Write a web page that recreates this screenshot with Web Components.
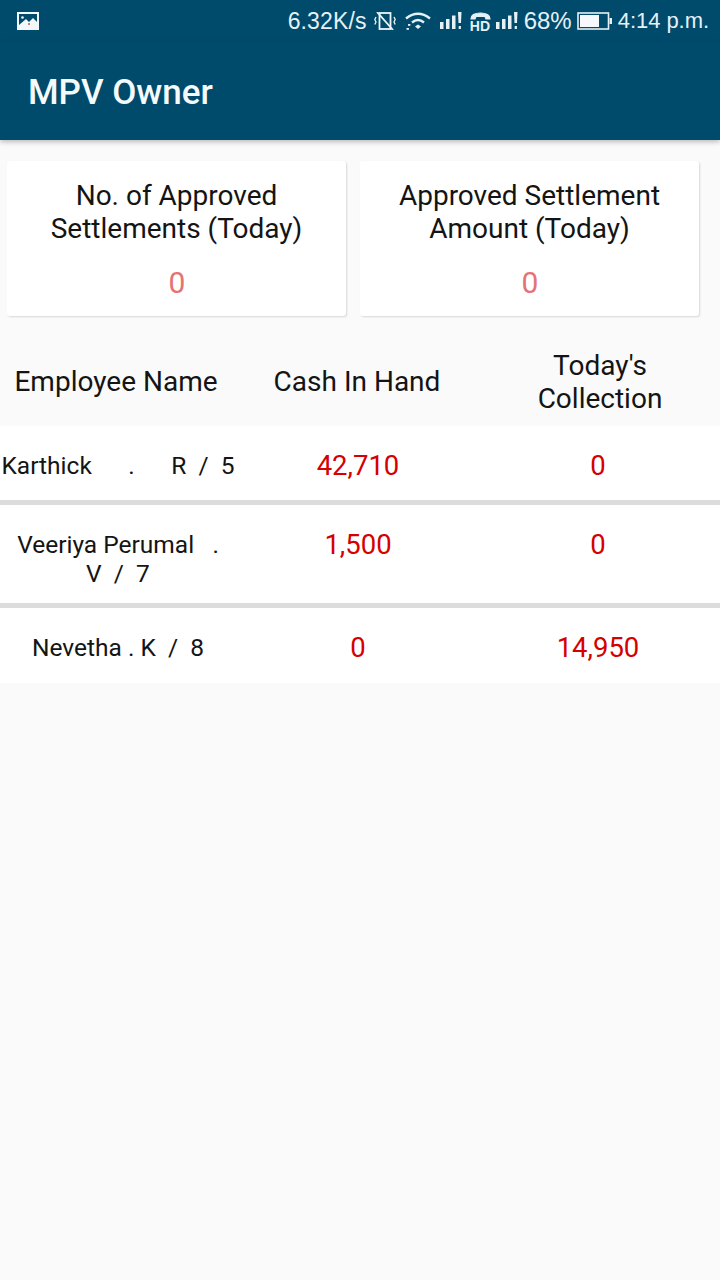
<!DOCTYPE html>
<html>
<head>
<meta charset="utf-8">
<title>MPV Owner</title>
<style>
html, body { margin: 0; padding: 0; background: #fafafa; }
body { width: 720px; height: 1280px; overflow: hidden; font-family: Roboto, sans-serif; display: flex; flex-direction: column; }
</style>
</head>
<body>
<status-bar></status-bar>
<app-bar>MPV Owner</app-bar>
<summary-row>
  <stat-card value="0">No. of Approved<br>Settlements (Today)</stat-card>
  <stat-card value="0">Approved Settlement<br>Amount (Today)</stat-card>
</summary-row>
<table-head></table-head>
<employee-row name="Karthick      .      R  /  5" cash="42,710" collection="0" style="height:74px"></employee-row>
<employee-row name="Veeriya Perumal   .    V  /  7" cash="1,500" collection="0" style="height:98px"></employee-row>
<employee-row name="Nevetha . K  /  8" cash="0" collection="14,950" style="height:75px" last></employee-row>

<script>
const signalBars = (mark) => `
    <rect x="0" y="10" width="3.5" height="7"/>
    <rect x="6" y="7" width="3.5" height="10"/>
    <rect x="12" y="3.5" width="3.5" height="13.5"/>
    <path d="M18 0 H21.5 L21 11 H18.5 Z"/>
    <rect x="18.7" y="${mark}" width="2.2" height="3"/>
`;

class StatusBar extends HTMLElement {
    constructor() {
        super();
        this.attachShadow({ mode: 'open' });
        this.shadowRoot.innerHTML = `
            <style>
                :host {
                    display: flex;
                    align-items: center;
                    height: 42px;
                    background: #004a6c;
                    color: #e6f1f5;
                    font-family: "Liberation Sans", sans-serif;
                    font-size: 23px;
                    padding: 0 11px 0 17px;
                    box-sizing: border-box;
                }
                .right { margin-left: auto; display: flex; align-items: center; white-space: nowrap; }
                svg { display: block; flex: none; }
                .speed { letter-spacing: .15px; }
                .level { font-size: 24px; margin-left: 6px; }
                .time { font-size: 22px; margin-left: 6px; letter-spacing: -.05px; }
            </style>
            <svg width="22" height="18" viewBox="0 0 22 18">
                <rect width="22" height="18" fill="#f2f7f9"/>
                <rect x="2" y="2" width="18" height="13" fill="#004a6c"/>
                <path d="M2 15 V13 L9 7 L12 10 L16 6 L20 10 V15 Z" fill="#f2f7f9"/>
                <circle cx="5.5" cy="5.5" r="1.3" fill="#f2f7f9"/>
                <circle cx="12" cy="12" r="1" fill="#b5566a"/>
            </svg>
            <div class="right">
                <span class="speed">6.32K/s</span>
                <svg style="margin-left:7px" width="22" height="18" viewBox="0 0 22 18" fill="none" stroke="#eef5f8" stroke-width="1.8">
                    <rect x="5.5" y="1" width="11" height="16"/>
                    <path d="M3 0 L19 18"/>
                    <path d="M2 5 L0.8 7.500 L2 10 L0.8 12.500 M20 5 L21.2 7.500 L20 10 L21.2 12.500" stroke-width="1.3"/>
                </svg>
                <svg style="margin-left:9px" width="26" height="18" viewBox="0 0 26 18" fill="none" stroke="#e6f1f5" stroke-width="2.4">
                    <path d="M1 6.5 Q13 -3 25 6.5"/>
                    <path d="M7 10.5 Q13 5.5 19 10.5"/>
                    <path d="M10 14.5 L13 12.5 L16 14.5 L13 17 Z" fill="#e6f1f5" stroke="none"/>
                    <rect x="3" y="12" width="2.4" height="1.8" fill="#e6f1f5" stroke="none"/>
                    <rect x="1.5" y="16" width="2.4" height="1.8" fill="#e6f1f5" stroke="none"/>
                </svg>
                <svg style="margin-left:9px" width="22" height="18" viewBox="0 0 22 18" fill="#e6f1f5">${signalBars(14)}</svg>
                <div style="margin-left:8px;width:21px;height:18px;position:relative;font:700 14px/10px 'Liberation Sans',sans-serif">
                    <svg style="position:absolute;left:0;top:0" width="21" height="8" viewBox="0 0 21 8" fill="#e6f1f5" stroke="#e6f1f5" stroke-width="1.2">
                        <path d="M1 7 Q1 1 10.500 1 Q20 1 20 7 H16 L15 4.500 H6 L5 7 Z"/>
                    </svg>
                    <span style="position:absolute;left:0;bottom:-1px;letter-spacing:.2px">HD</span>
                </div>
                <svg style="margin-left:5px" width="22" height="18" viewBox="0 0 22 18" fill="#e6f1f5">${signalBars(14)}</svg>
                <span class="level">68%</span>
                <svg style="margin-left:5px" width="35" height="18" viewBox="0 0 35 18">
                    <rect x="1" y="1" width="30.500" height="16" fill="none" stroke="#e6f1f5" stroke-width="1.6"/>
                    <rect x="3" y="3" width="19" height="12" fill="#f5f9fb"/>
                    <rect x="32.500" y="6" width="2.500" height="6" fill="#e6f1f5"/>
                </svg>
                <span class="time">4:14 p.m.</span>
            </div>
        `;
    }
}

class AppBar extends HTMLElement {
    constructor() {
        super();
        this.attachShadow({ mode: 'open' });
        this.shadowRoot.innerHTML = `
            <style>
                :host {
                    display: flex;
                    align-items: center;
                    height: 98px;
                    padding: 2px 0 0 28px;
                    box-sizing: border-box;
                    background: #004a6c;
                    color: #f5fafc;
                    font-size: 35px;
                    font-weight: 500;
                    box-shadow: 0 2px 5px rgba(0, 0, 0, 0.25);
                    position: relative;
                }
            </style>
            <slot></slot>
        `;
    }
}

class SummaryRow extends HTMLElement {
    constructor() {
        super();
        this.attachShadow({ mode: 'open' });
        this.shadowRoot.innerHTML = `
            <style>
                :host {
                    display: flex;
                    gap: 14px;
                    padding: 21px 21px 0 7px;
                }
            </style>
            <slot></slot>
        `;
    }
}

class StatCard extends HTMLElement {
    constructor() {
        super();
        this.attachShadow({ mode: 'open' });
        const value = this.getAttribute('value') || '';
        this.shadowRoot.innerHTML = `
            <style>
                :host {
                    display: block;
                    width: 339px;
                    height: 155px;
                    box-sizing: border-box;
                    padding-top: 18px;
                    background: #fff;
                    border-radius: 3px;
                    box-shadow: 1px 1px 2px rgba(0, 0, 0, 0.14);
                    text-align: center;
                    color: #141414;
                    font-size: 28px;
                    line-height: 33px;
                }
                .value {
                    margin-top: 20px;
                    color: #e57373;
                    font-size: 30px;
                    line-height: 36px;
                    padding-left: 1px;
                }
            </style>
            <div><slot></slot></div>
            <div class="value">${value}</div>
        `;
    }
}

const tableColumns = 'grid-template-columns: 236px 244px 240px;';

class TableHead extends HTMLElement {
    constructor() {
        super();
        this.attachShadow({ mode: 'open' });
        this.shadowRoot.innerHTML = `
            <style>
                :host {
                    display: grid;
                    ${tableColumns}
                    align-items: center;
                    height: 110px;
                    padding: 21px 0 1px;
                    box-sizing: border-box;
                    text-align: center;
                    color: #141414;
                    font-size: 28px;
                    line-height: 33px;
                }
                div { white-space: nowrap; }
            </style>
            <div style="margin-right:4px">Employee Name</div>
            <div style="margin-right:2px">Cash In Hand</div>
            <div style="padding-top:2px">Today's<br>Collection</div>
        `;
    }
}

class EmployeeRow extends HTMLElement {
    constructor() {
        super();
        this.attachShadow({ mode: 'open' });
        const name = this.getAttribute('name') || '';
        const cash = this.getAttribute('cash') || '';
        const collection = this.getAttribute('collection') || '';
        this.shadowRoot.innerHTML = `
            <style>
                :host {
                    display: grid;
                    ${tableColumns}
                    box-sizing: content-box;
                    background: #fff;
                    border-bottom: 5px solid #dcdcdc;
                    text-align: center;
                }
                :host([last]) { border-bottom: 0; }
                .cell { padding-top: 21px; }
                .name {
                    color: #141414;
                    font-size: 24.5px;
                    line-height: 28.5px;
                    white-space: pre-wrap;
                    padding-top: 26px;
                }
                .amount {
                    color: #d50000;
                    font-size: 27.5px;
                    line-height: 37px;
                }
                .collection { padding-right: 4px; }
            </style>
            <div class="cell name">${name}</div>
            <div class="cell amount">${cash}</div>
            <div class="cell amount collection">${collection}</div>
        `;
    }
}

customElements.define('status-bar', StatusBar);
customElements.define('app-bar', AppBar);
customElements.define('summary-row', SummaryRow);
customElements.define('stat-card', StatCard);
customElements.define('table-head', TableHead);
customElements.define('employee-row', EmployeeRow);
</script>
</body>
</html>
